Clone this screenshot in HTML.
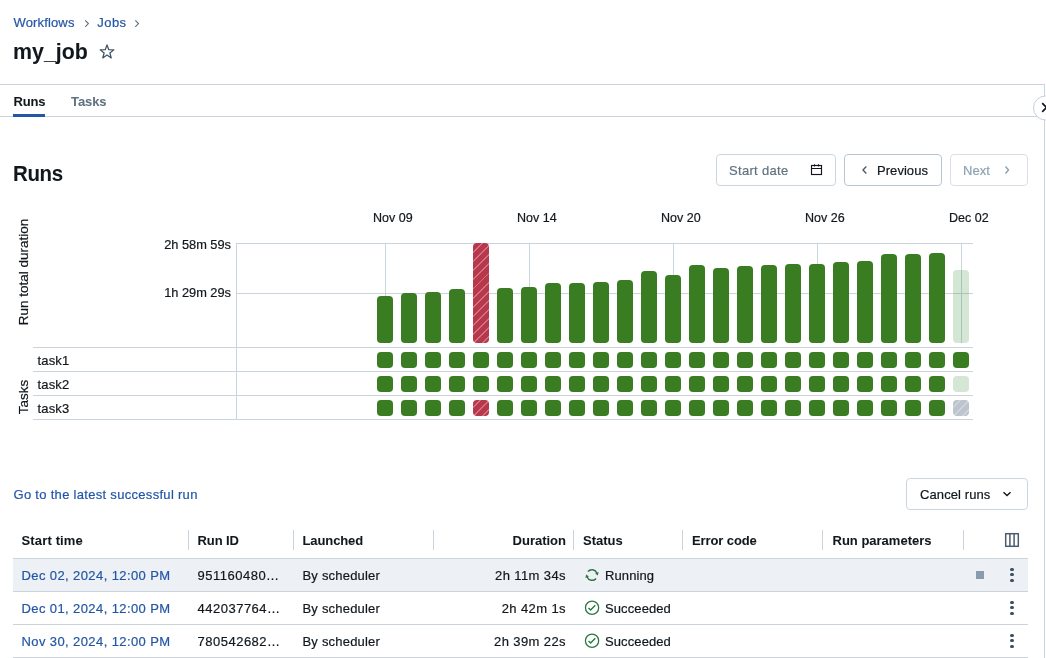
<!DOCTYPE html>
<html><head><meta charset="utf-8"><style>
html,body{margin:0;padding:0;background:#fff;}
body{width:1046px;height:658px;position:relative;overflow:hidden;font-family:"Liberation Sans",sans-serif;}
.t{position:absolute;white-space:nowrap;line-height:20px;-webkit-font-smoothing:antialiased;-webkit-text-stroke:0.2px currentColor;}
#w{position:absolute;left:0;top:0;width:1046px;height:658px;will-change:transform;}
.r{position:absolute;}
svg{position:absolute;overflow:visible;}
</style></head><body><div id="w">
<div class="t" style="left:13.5px;top:12.50px;font-size:13px;font-weight:400;color:#2356A6;letter-spacing:0.15px;">Workflows</div>
<svg style="left:82px;top:18px" width="10" height="12" viewBox="0 0 10 12"><path d="M3.2 2.4 L6.4 5.6 L3.2 8.8" fill="none" stroke="#5F7281" stroke-width="1.15"/></svg>
<div class="t" style="left:97.3px;top:12.50px;font-size:13px;font-weight:400;color:#2356A6;letter-spacing:0.45px;">Jobs</div>
<svg style="left:132px;top:18px" width="10" height="12" viewBox="0 0 10 12"><path d="M3.3 2.4 L6.5 5.6 L3.3 8.8" fill="none" stroke="#5F7281" stroke-width="1.15"/></svg>
<div class="t" style="left:12.5px;top:42.20px;font-size:22.5px;font-weight:700;color:#11171C;-webkit-text-stroke:0.05px currentColor;transform:scaleX(0.95);transform-origin:0 0;">my_job</div>
<svg style="left:99px;top:44px" width="16" height="16" viewBox="0 0 16 16"><path d="M8.00 0.90 L9.76 5.67 L14.85 5.88 L10.85 9.03 L12.23 13.92 L8.00 11.10 L3.77 13.92 L5.15 9.03 L1.15 5.88 L6.24 5.67 Z" fill="none" stroke="#3E5264" stroke-width="1.25" stroke-linejoin="round"/></svg>
<div class="r" style="left:0px;top:84px;width:1044px;height:1px;background:#CBD3DD;"></div>
<div class="r" style="left:0px;top:116px;width:1044px;height:1px;background:#CBD3DD;"></div>
<div class="r" style="left:1044px;top:84px;width:1px;height:574px;background:#CBD3DD;"></div>
<div class="t" style="left:13.5px;top:91.50px;font-size:13px;font-weight:700;color:#11171C;letter-spacing:-0.2px;-webkit-text-stroke:0.05px currentColor;">Runs</div>
<div class="t" style="left:71px;top:91.50px;font-size:13px;font-weight:700;color:#5F7281;letter-spacing:-0.1px;-webkit-text-stroke:0.05px currentColor;">Tasks</div>
<div class="r" style="left:13px;top:114px;width:32px;height:3px;background:#2356A6;"></div>
<svg style="left:1032px;top:94px" width="28" height="28" viewBox="0 0 28 28"><circle cx="13.5" cy="14" r="12" fill="#fff" stroke="#C5D0DC" stroke-width="1"/><path d="M10.2 9.2 L18.8 17.8 M18.8 9.2 L10.2 17.8" fill="none" stroke="#11171C" stroke-width="1.7"/></svg>
<div class="t" style="left:12.5px;top:164.38px;font-size:22px;font-weight:700;color:#11171C;letter-spacing:-0.4px;-webkit-text-stroke:0.05px currentColor;transform:scaleX(0.93);transform-origin:0 0;">Runs</div>
<div class="r" style="left:716px;top:154px;width:118px;height:30px;border:1px solid #CBD5DE;border-radius:4px;"></div>
<div class="t" style="left:729px;top:160.50px;font-size:13px;font-weight:400;color:#5F7281;letter-spacing:0.32px;">Start date</div>
<svg style="left:810px;top:162px" width="14" height="14" viewBox="0 0 14 14"><rect x="1.5" y="3.5" width="10" height="9" fill="none" stroke="#11171C" stroke-width="1.15"/><path d="M1.5 6.5 H11.5 M4.5 2.2 V4.5 M8.5 2.2 V4.5" stroke="#11171C" stroke-width="1.15"/></svg>
<div class="r" style="left:844px;top:154px;width:96px;height:30px;border:1px solid #B9C6D2;border-radius:4px;"></div>
<svg style="left:860px;top:164px" width="8" height="12" viewBox="0 0 8 12"><path d="M6.3 2.5 L3 6 L6.3 9.5" fill="none" stroke="#4A5D6E" stroke-width="1.4"/></svg>
<div class="t" style="left:877px;top:160.50px;font-size:13px;font-weight:400;color:#11171C;letter-spacing:0.05px;">Previous</div>
<div class="r" style="left:950px;top:154px;width:76px;height:30px;border:1px solid #D8DFE6;border-radius:4px;"></div>
<div class="t" style="left:963px;top:160.50px;font-size:13px;font-weight:400;color:#8FA1B1;letter-spacing:0.05px;">Next</div>
<svg style="left:1003px;top:164px" width="8" height="12" viewBox="0 0 8 12"><path d="M2.5 2.5 L5.5 6 L2.5 9.5" fill="none" stroke="#8FA1B1" stroke-width="1.4"/></svg>
<div class="t" style="left:24px;top:272px;font-size:13.5px;color:#11171C;transform:translate(-50%,-50%) rotate(-90deg);line-height:14px;">Run total duration</div>
<div class="t" style="left:24px;top:397px;font-size:13.5px;color:#11171C;transform:translate(-50%,-50%) rotate(-90deg);line-height:14px;">Tasks</div>
<div class="t" style="right:815px;top:234.56px;font-size:12.8px;font-weight:400;color:#11171C;">2h 58m 59s</div>
<div class="t" style="right:815px;top:282.56px;font-size:12.8px;font-weight:400;color:#11171C;">1h 29m 29s</div>
<div class="t" style="left:373px;top:207.67px;font-size:12.5px;font-weight:400;color:#11171C;">Nov 09</div>
<div class="t" style="left:517px;top:207.67px;font-size:12.5px;font-weight:400;color:#11171C;">Nov 14</div>
<div class="t" style="left:661px;top:207.67px;font-size:12.5px;font-weight:400;color:#11171C;">Nov 20</div>
<div class="t" style="left:805px;top:207.67px;font-size:12.5px;font-weight:400;color:#11171C;">Nov 26</div>
<div class="t" style="left:949px;top:207.67px;font-size:12.5px;font-weight:400;color:#11171C;">Dec 02</div>
<div class="r" style="left:236px;top:243px;width:737px;height:1px;background:#CBD3DD;"></div>
<div class="r" style="left:236px;top:293px;width:737px;height:1px;background:#CBD3DD;"></div>
<div class="r" style="left:236px;top:243px;width:1px;height:177px;background:#CBD3DD;"></div>
<div class="r" style="left:33px;top:347px;width:940px;height:1px;background:#CBD3DD;"></div>
<div class="r" style="left:33px;top:371px;width:940px;height:1px;background:#CBD3DD;"></div>
<div class="r" style="left:33px;top:395px;width:940px;height:1px;background:#CBD3DD;"></div>
<div class="r" style="left:33px;top:419px;width:940px;height:1px;background:#CBD3DD;"></div>
<div class="r" style="left:385px;top:243px;width:1px;height:100px;background:#CBD3DD;"></div>
<div class="r" style="left:529px;top:243px;width:1px;height:100px;background:#CBD3DD;"></div>
<div class="r" style="left:673px;top:243px;width:1px;height:100px;background:#CBD3DD;"></div>
<div class="r" style="left:817px;top:243px;width:1px;height:100px;background:#CBD3DD;"></div>
<div class="r" style="left:961px;top:243px;width:1px;height:100px;background:#CBD3DD;"></div>
<div class="r" style="left:377px;top:296px;width:16px;height:47px;background:#3A7C22;border-radius:4px;"></div>
<div class="r" style="left:377px;top:352px;width:16px;height:16px;background:#3A7C22;border-radius:4px;"></div>
<div class="r" style="left:377px;top:376px;width:16px;height:16px;background:#3A7C22;border-radius:4px;"></div>
<div class="r" style="left:377px;top:400px;width:16px;height:16px;background:#3A7C22;border-radius:4px;"></div>
<div class="r" style="left:401px;top:293px;width:16px;height:50px;background:#3A7C22;border-radius:4px;"></div>
<div class="r" style="left:401px;top:352px;width:16px;height:16px;background:#3A7C22;border-radius:4px;"></div>
<div class="r" style="left:401px;top:376px;width:16px;height:16px;background:#3A7C22;border-radius:4px;"></div>
<div class="r" style="left:401px;top:400px;width:16px;height:16px;background:#3A7C22;border-radius:4px;"></div>
<div class="r" style="left:425px;top:292px;width:16px;height:51px;background:#3A7C22;border-radius:4px;"></div>
<div class="r" style="left:425px;top:352px;width:16px;height:16px;background:#3A7C22;border-radius:4px;"></div>
<div class="r" style="left:425px;top:376px;width:16px;height:16px;background:#3A7C22;border-radius:4px;"></div>
<div class="r" style="left:425px;top:400px;width:16px;height:16px;background:#3A7C22;border-radius:4px;"></div>
<div class="r" style="left:449px;top:289px;width:16px;height:54px;background:#3A7C22;border-radius:4px;"></div>
<div class="r" style="left:449px;top:352px;width:16px;height:16px;background:#3A7C22;border-radius:4px;"></div>
<div class="r" style="left:449px;top:376px;width:16px;height:16px;background:#3A7C22;border-radius:4px;"></div>
<div class="r" style="left:449px;top:400px;width:16px;height:16px;background:#3A7C22;border-radius:4px;"></div>
<div class="r" style="left:473px;top:243px;width:16px;height:100px;background:#B9374B;border-radius:4px;background-image:repeating-linear-gradient(-45deg, rgba(255,255,255,0) 0px, rgba(255,255,255,0) 4.0px, rgba(255,255,255,0.3) 4.0px, rgba(255,255,255,0.3) 5.4px, rgba(255,255,255,0) 5.4px, rgba(255,255,255,0) 6.4px);"></div>
<div class="r" style="left:473px;top:352px;width:16px;height:16px;background:#3A7C22;border-radius:4px;"></div>
<div class="r" style="left:473px;top:376px;width:16px;height:16px;background:#3A7C22;border-radius:4px;"></div>
<div class="r" style="left:473px;top:400px;width:16px;height:16px;background:#B9374B;border-radius:4px;background-image:repeating-linear-gradient(-45deg, rgba(255,255,255,0) 0px, rgba(255,255,255,0) 4.0px, rgba(255,255,255,0.3) 4.0px, rgba(255,255,255,0.3) 5.4px, rgba(255,255,255,0) 5.4px, rgba(255,255,255,0) 6.4px);"></div>
<div class="r" style="left:497px;top:288px;width:16px;height:55px;background:#3A7C22;border-radius:4px;"></div>
<div class="r" style="left:497px;top:352px;width:16px;height:16px;background:#3A7C22;border-radius:4px;"></div>
<div class="r" style="left:497px;top:376px;width:16px;height:16px;background:#3A7C22;border-radius:4px;"></div>
<div class="r" style="left:497px;top:400px;width:16px;height:16px;background:#3A7C22;border-radius:4px;"></div>
<div class="r" style="left:521px;top:287px;width:16px;height:56px;background:#3A7C22;border-radius:4px;"></div>
<div class="r" style="left:521px;top:352px;width:16px;height:16px;background:#3A7C22;border-radius:4px;"></div>
<div class="r" style="left:521px;top:376px;width:16px;height:16px;background:#3A7C22;border-radius:4px;"></div>
<div class="r" style="left:521px;top:400px;width:16px;height:16px;background:#3A7C22;border-radius:4px;"></div>
<div class="r" style="left:545px;top:283px;width:16px;height:60px;background:#3A7C22;border-radius:4px;"></div>
<div class="r" style="left:545px;top:352px;width:16px;height:16px;background:#3A7C22;border-radius:4px;"></div>
<div class="r" style="left:545px;top:376px;width:16px;height:16px;background:#3A7C22;border-radius:4px;"></div>
<div class="r" style="left:545px;top:400px;width:16px;height:16px;background:#3A7C22;border-radius:4px;"></div>
<div class="r" style="left:569px;top:283px;width:16px;height:60px;background:#3A7C22;border-radius:4px;"></div>
<div class="r" style="left:569px;top:352px;width:16px;height:16px;background:#3A7C22;border-radius:4px;"></div>
<div class="r" style="left:569px;top:376px;width:16px;height:16px;background:#3A7C22;border-radius:4px;"></div>
<div class="r" style="left:569px;top:400px;width:16px;height:16px;background:#3A7C22;border-radius:4px;"></div>
<div class="r" style="left:593px;top:282px;width:16px;height:61px;background:#3A7C22;border-radius:4px;"></div>
<div class="r" style="left:593px;top:352px;width:16px;height:16px;background:#3A7C22;border-radius:4px;"></div>
<div class="r" style="left:593px;top:376px;width:16px;height:16px;background:#3A7C22;border-radius:4px;"></div>
<div class="r" style="left:593px;top:400px;width:16px;height:16px;background:#3A7C22;border-radius:4px;"></div>
<div class="r" style="left:617px;top:280px;width:16px;height:63px;background:#3A7C22;border-radius:4px;"></div>
<div class="r" style="left:617px;top:352px;width:16px;height:16px;background:#3A7C22;border-radius:4px;"></div>
<div class="r" style="left:617px;top:376px;width:16px;height:16px;background:#3A7C22;border-radius:4px;"></div>
<div class="r" style="left:617px;top:400px;width:16px;height:16px;background:#3A7C22;border-radius:4px;"></div>
<div class="r" style="left:641px;top:271px;width:16px;height:72px;background:#3A7C22;border-radius:4px;"></div>
<div class="r" style="left:641px;top:352px;width:16px;height:16px;background:#3A7C22;border-radius:4px;"></div>
<div class="r" style="left:641px;top:376px;width:16px;height:16px;background:#3A7C22;border-radius:4px;"></div>
<div class="r" style="left:641px;top:400px;width:16px;height:16px;background:#3A7C22;border-radius:4px;"></div>
<div class="r" style="left:665px;top:275px;width:16px;height:68px;background:#3A7C22;border-radius:4px;"></div>
<div class="r" style="left:665px;top:352px;width:16px;height:16px;background:#3A7C22;border-radius:4px;"></div>
<div class="r" style="left:665px;top:376px;width:16px;height:16px;background:#3A7C22;border-radius:4px;"></div>
<div class="r" style="left:665px;top:400px;width:16px;height:16px;background:#3A7C22;border-radius:4px;"></div>
<div class="r" style="left:689px;top:265px;width:16px;height:78px;background:#3A7C22;border-radius:4px;"></div>
<div class="r" style="left:689px;top:352px;width:16px;height:16px;background:#3A7C22;border-radius:4px;"></div>
<div class="r" style="left:689px;top:376px;width:16px;height:16px;background:#3A7C22;border-radius:4px;"></div>
<div class="r" style="left:689px;top:400px;width:16px;height:16px;background:#3A7C22;border-radius:4px;"></div>
<div class="r" style="left:713px;top:268px;width:16px;height:75px;background:#3A7C22;border-radius:4px;"></div>
<div class="r" style="left:713px;top:352px;width:16px;height:16px;background:#3A7C22;border-radius:4px;"></div>
<div class="r" style="left:713px;top:376px;width:16px;height:16px;background:#3A7C22;border-radius:4px;"></div>
<div class="r" style="left:713px;top:400px;width:16px;height:16px;background:#3A7C22;border-radius:4px;"></div>
<div class="r" style="left:737px;top:266px;width:16px;height:77px;background:#3A7C22;border-radius:4px;"></div>
<div class="r" style="left:737px;top:352px;width:16px;height:16px;background:#3A7C22;border-radius:4px;"></div>
<div class="r" style="left:737px;top:376px;width:16px;height:16px;background:#3A7C22;border-radius:4px;"></div>
<div class="r" style="left:737px;top:400px;width:16px;height:16px;background:#3A7C22;border-radius:4px;"></div>
<div class="r" style="left:761px;top:265px;width:16px;height:78px;background:#3A7C22;border-radius:4px;"></div>
<div class="r" style="left:761px;top:352px;width:16px;height:16px;background:#3A7C22;border-radius:4px;"></div>
<div class="r" style="left:761px;top:376px;width:16px;height:16px;background:#3A7C22;border-radius:4px;"></div>
<div class="r" style="left:761px;top:400px;width:16px;height:16px;background:#3A7C22;border-radius:4px;"></div>
<div class="r" style="left:785px;top:264px;width:16px;height:79px;background:#3A7C22;border-radius:4px;"></div>
<div class="r" style="left:785px;top:352px;width:16px;height:16px;background:#3A7C22;border-radius:4px;"></div>
<div class="r" style="left:785px;top:376px;width:16px;height:16px;background:#3A7C22;border-radius:4px;"></div>
<div class="r" style="left:785px;top:400px;width:16px;height:16px;background:#3A7C22;border-radius:4px;"></div>
<div class="r" style="left:809px;top:264px;width:16px;height:79px;background:#3A7C22;border-radius:4px;"></div>
<div class="r" style="left:809px;top:352px;width:16px;height:16px;background:#3A7C22;border-radius:4px;"></div>
<div class="r" style="left:809px;top:376px;width:16px;height:16px;background:#3A7C22;border-radius:4px;"></div>
<div class="r" style="left:809px;top:400px;width:16px;height:16px;background:#3A7C22;border-radius:4px;"></div>
<div class="r" style="left:833px;top:262px;width:16px;height:81px;background:#3A7C22;border-radius:4px;"></div>
<div class="r" style="left:833px;top:352px;width:16px;height:16px;background:#3A7C22;border-radius:4px;"></div>
<div class="r" style="left:833px;top:376px;width:16px;height:16px;background:#3A7C22;border-radius:4px;"></div>
<div class="r" style="left:833px;top:400px;width:16px;height:16px;background:#3A7C22;border-radius:4px;"></div>
<div class="r" style="left:857px;top:261px;width:16px;height:82px;background:#3A7C22;border-radius:4px;"></div>
<div class="r" style="left:857px;top:352px;width:16px;height:16px;background:#3A7C22;border-radius:4px;"></div>
<div class="r" style="left:857px;top:376px;width:16px;height:16px;background:#3A7C22;border-radius:4px;"></div>
<div class="r" style="left:857px;top:400px;width:16px;height:16px;background:#3A7C22;border-radius:4px;"></div>
<div class="r" style="left:881px;top:254px;width:16px;height:89px;background:#3A7C22;border-radius:4px;"></div>
<div class="r" style="left:881px;top:352px;width:16px;height:16px;background:#3A7C22;border-radius:4px;"></div>
<div class="r" style="left:881px;top:376px;width:16px;height:16px;background:#3A7C22;border-radius:4px;"></div>
<div class="r" style="left:881px;top:400px;width:16px;height:16px;background:#3A7C22;border-radius:4px;"></div>
<div class="r" style="left:905px;top:254px;width:16px;height:89px;background:#3A7C22;border-radius:4px;"></div>
<div class="r" style="left:905px;top:352px;width:16px;height:16px;background:#3A7C22;border-radius:4px;"></div>
<div class="r" style="left:905px;top:376px;width:16px;height:16px;background:#3A7C22;border-radius:4px;"></div>
<div class="r" style="left:905px;top:400px;width:16px;height:16px;background:#3A7C22;border-radius:4px;"></div>
<div class="r" style="left:929px;top:253px;width:16px;height:90px;background:#3A7C22;border-radius:4px;"></div>
<div class="r" style="left:929px;top:352px;width:16px;height:16px;background:#3A7C22;border-radius:4px;"></div>
<div class="r" style="left:929px;top:376px;width:16px;height:16px;background:#3A7C22;border-radius:4px;"></div>
<div class="r" style="left:929px;top:400px;width:16px;height:16px;background:#3A7C22;border-radius:4px;"></div>
<div class="r" style="left:953px;top:270px;width:16px;height:73px;background:rgba(58,140,60,0.22);border-radius:4px;"></div>
<div class="r" style="left:953px;top:352px;width:16px;height:16px;background:#3A7C22;border-radius:4px;"></div>
<div class="r" style="left:953px;top:376px;width:16px;height:16px;background:rgba(58,140,60,0.22);border-radius:4px;"></div>
<div class="r" style="left:953px;top:400px;width:16px;height:16px;background:#BDC4CD;border-radius:4px;background-image:repeating-linear-gradient(-45deg, rgba(255,255,255,0) 0px, rgba(255,255,255,0) 4.0px, rgba(255,255,255,0.3) 4.0px, rgba(255,255,255,0.3) 5.4px, rgba(255,255,255,0) 5.4px, rgba(255,255,255,0) 6.4px);"></div>
<div class="t" style="left:37.5px;top:350.50px;font-size:13px;font-weight:400;color:#11171C;letter-spacing:0.15px;">task1</div>
<div class="t" style="left:37.5px;top:374.50px;font-size:13px;font-weight:400;color:#11171C;letter-spacing:0.15px;">task2</div>
<div class="t" style="left:37.5px;top:398.50px;font-size:13px;font-weight:400;color:#11171C;letter-spacing:0.15px;">task3</div>
<div class="t" style="left:13.5px;top:484.50px;font-size:13px;font-weight:400;color:#2356A6;letter-spacing:0.3px;">Go to the latest successful run</div>
<div class="r" style="left:906px;top:478px;width:120px;height:30px;border:1px solid #CBD5DE;border-radius:4px;"></div>
<div class="t" style="left:920px;top:484.50px;font-size:13px;font-weight:400;color:#11171C;letter-spacing:0.1px;">Cancel runs</div>
<svg style="left:1002px;top:490px" width="10" height="8" viewBox="0 0 10 8"><path d="M1.5 2.2 L5 5.5 L8.5 2.2" fill="none" stroke="#11171C" stroke-width="1.4"/></svg>
<div class="t" style="left:21.5px;top:530.50px;font-size:13px;font-weight:700;color:#11171C;letter-spacing:0.15px;-webkit-text-stroke:0.05px currentColor;">Start time</div>
<div class="t" style="left:197.5px;top:530.50px;font-size:13px;font-weight:700;color:#11171C;letter-spacing:-0.1px;-webkit-text-stroke:0.05px currentColor;">Run ID</div>
<div class="t" style="left:302.5px;top:530.50px;font-size:13px;font-weight:700;color:#11171C;letter-spacing:-0.1px;-webkit-text-stroke:0.05px currentColor;">Launched</div>
<div class="t" style="right:480px;top:530.50px;font-size:13px;font-weight:700;color:#11171C;-webkit-text-stroke:0.05px currentColor;">Duration</div>
<div class="t" style="left:583px;top:530.50px;font-size:13px;font-weight:700;color:#11171C;-webkit-text-stroke:0.05px currentColor;">Status</div>
<div class="t" style="left:692px;top:530.50px;font-size:13px;font-weight:700;color:#11171C;letter-spacing:-0.1px;-webkit-text-stroke:0.05px currentColor;">Error code</div>
<div class="t" style="left:832.5px;top:530.50px;font-size:13px;font-weight:700;color:#11171C;-webkit-text-stroke:0.05px currentColor;">Run parameters</div>
<div class="r" style="left:188px;top:530px;width:1px;height:20px;background:#CBD3DD;"></div>
<div class="r" style="left:293px;top:530px;width:1px;height:20px;background:#CBD3DD;"></div>
<div class="r" style="left:433px;top:530px;width:1px;height:20px;background:#CBD3DD;"></div>
<div class="r" style="left:573px;top:530px;width:1px;height:20px;background:#CBD3DD;"></div>
<div class="r" style="left:682px;top:530px;width:1px;height:20px;background:#CBD3DD;"></div>
<div class="r" style="left:822px;top:530px;width:1px;height:20px;background:#CBD3DD;"></div>
<div class="r" style="left:963px;top:530px;width:1px;height:20px;background:#CBD3DD;"></div>
<svg style="left:1004px;top:532px" width="16" height="16" viewBox="0 0 16 16"><rect x="1.7" y="1.7" width="12.6" height="12.6" fill="none" stroke="#4A5D6E" stroke-width="1.5"/><path d="M5.9 1.6 V14.4 M10.1 1.6 V14.4" stroke="#4A5D6E" stroke-width="1.5"/></svg>
<div class="r" style="left:13px;top:558px;width:1015px;height:1px;background:#CBD3DD;"></div>
<div class="r" style="left:13px;top:559px;width:1015px;height:32px;background:#EDF1F5;"></div>
<div class="r" style="left:13px;top:591px;width:1015px;height:1px;background:#CBD3DD;"></div>
<div class="r" style="left:13px;top:624px;width:1015px;height:1px;background:#CBD3DD;"></div>
<div class="r" style="left:13px;top:657px;width:1015px;height:1px;background:#CBD3DD;"></div>
<div class="t" style="left:21.5px;top:565.50px;font-size:13px;font-weight:400;color:#2356A6;letter-spacing:0.4px;">Dec 02, 2024, 12:00 PM</div>
<div class="t" style="left:197.5px;top:565.50px;font-size:13px;font-weight:400;color:#11171C;letter-spacing:0.5px;">951160480…</div>
<div class="t" style="left:302.5px;top:565.50px;font-size:13px;font-weight:400;color:#11171C;letter-spacing:0.2px;">By scheduler</div>
<div class="t" style="right:480px;top:565.50px;font-size:13px;font-weight:400;color:#11171C;letter-spacing:0.4px;">2h 11m 34s</div>
<div class="t" style="left:605px;top:565.50px;font-size:13px;font-weight:400;color:#11171C;letter-spacing:0.1px;">Running</div>
<svg style="left:582px;top:565px" width="20" height="20" viewBox="0 0 20 20"><path d="M5.94 6.59 A5.3 5.3 0 0 1 14.91 8.01 M14.06 13.41 A5.3 5.3 0 0 1 5.09 11.99" fill="none" stroke="#2B7742" stroke-width="1.5"/><path d="M15.89 10.43 L16.56 7.02 L13.04 8.45 Z M4.11 9.57 L3.44 12.98 L6.96 11.55 Z" fill="#2B7742"/></svg>
<div class="r" style="left:976px;top:571px;width:8px;height:8px;background:#8A9BAB;"></div>
<div class="r" style="left:1010.4px;top:567.90px;width:3.2px;height:3.2px;border-radius:50%;background:#3D4F5E;"></div>
<div class="r" style="left:1010.4px;top:573.30px;width:3.2px;height:3.2px;border-radius:50%;background:#3D4F5E;"></div>
<div class="r" style="left:1010.4px;top:578.70px;width:3.2px;height:3.2px;border-radius:50%;background:#3D4F5E;"></div>
<div class="t" style="left:21.5px;top:598.50px;font-size:13px;font-weight:400;color:#2356A6;letter-spacing:0.4px;">Dec 01, 2024, 12:00 PM</div>
<div class="t" style="left:197.5px;top:598.50px;font-size:13px;font-weight:400;color:#11171C;letter-spacing:0.5px;">442037764…</div>
<div class="t" style="left:302.5px;top:598.50px;font-size:13px;font-weight:400;color:#11171C;letter-spacing:0.2px;">By scheduler</div>
<div class="t" style="right:480px;top:598.50px;font-size:13px;font-weight:400;color:#11171C;letter-spacing:0.4px;">2h 42m 1s</div>
<div class="t" style="left:605px;top:598.50px;font-size:13px;font-weight:400;color:#11171C;letter-spacing:0.1px;">Succeeded</div>
<svg style="left:584px;top:600px" width="16" height="16" viewBox="0 0 16 16"><circle cx="8.05" cy="7.75" r="6.6" fill="none" stroke="#2B7742" stroke-width="1.3"/><path d="M4.5 8.1 L6.6 10.1 L11.3 5.2" fill="none" stroke="#2B7742" stroke-width="1.4"/></svg>
<div class="r" style="left:1010.4px;top:600.90px;width:3.2px;height:3.2px;border-radius:50%;background:#3D4F5E;"></div>
<div class="r" style="left:1010.4px;top:606.30px;width:3.2px;height:3.2px;border-radius:50%;background:#3D4F5E;"></div>
<div class="r" style="left:1010.4px;top:611.70px;width:3.2px;height:3.2px;border-radius:50%;background:#3D4F5E;"></div>
<div class="t" style="left:21.5px;top:631.50px;font-size:13px;font-weight:400;color:#2356A6;letter-spacing:0.4px;">Nov 30, 2024, 12:00 PM</div>
<div class="t" style="left:197.5px;top:631.50px;font-size:13px;font-weight:400;color:#11171C;letter-spacing:0.5px;">780542682…</div>
<div class="t" style="left:302.5px;top:631.50px;font-size:13px;font-weight:400;color:#11171C;letter-spacing:0.2px;">By scheduler</div>
<div class="t" style="right:480px;top:631.50px;font-size:13px;font-weight:400;color:#11171C;letter-spacing:0.4px;">2h 39m 22s</div>
<div class="t" style="left:605px;top:631.50px;font-size:13px;font-weight:400;color:#11171C;letter-spacing:0.1px;">Succeeded</div>
<svg style="left:584px;top:633px" width="16" height="16" viewBox="0 0 16 16"><circle cx="8.05" cy="7.75" r="6.6" fill="none" stroke="#2B7742" stroke-width="1.3"/><path d="M4.5 8.1 L6.6 10.1 L11.3 5.2" fill="none" stroke="#2B7742" stroke-width="1.4"/></svg>
<div class="r" style="left:1010.4px;top:633.90px;width:3.2px;height:3.2px;border-radius:50%;background:#3D4F5E;"></div>
<div class="r" style="left:1010.4px;top:639.30px;width:3.2px;height:3.2px;border-radius:50%;background:#3D4F5E;"></div>
<div class="r" style="left:1010.4px;top:644.70px;width:3.2px;height:3.2px;border-radius:50%;background:#3D4F5E;"></div>
</div></body></html>
